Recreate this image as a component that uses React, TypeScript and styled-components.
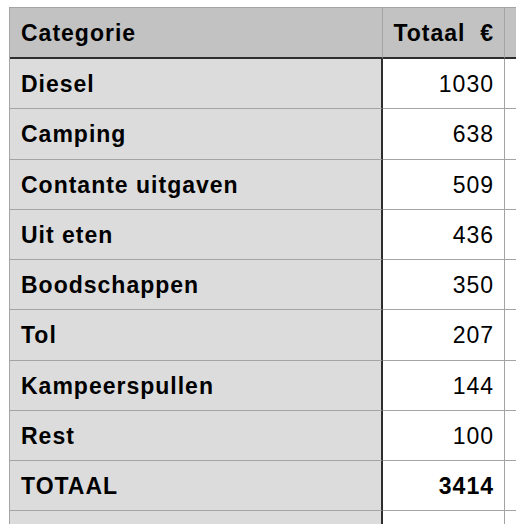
import React from "react";
import styled, { createGlobalStyle } from "styled-components";

const Global = createGlobalStyle`
  html, body { margin: 0; padding: 0; background: #ffffff; }
  body { font-family: "Liberation Sans", Arial, Helvetica, sans-serif; color: #000; }
`;

const Sheet = styled.div`
  width: 516px;
  height: 524px;
  overflow: hidden;
  padding: 7px 0 0 9px;
  box-sizing: border-box;
`;

const Grid = styled.div`
  display: grid;
  grid-template-columns: 373px 122px 40px;
  width: 536px;
  border-top: 1px solid #a4a4a4;
  border-left: 1px solid #a4a4a4;
`;

const Cell = styled.div<{ $head?: boolean; $kind: "label" | "value" | "spare"; $bold?: boolean }>`
  box-sizing: border-box;
  height: ${(p) => (p.$head ? "51px" : "50.25px")};
  display: flex;
  align-items: center;
  justify-content: ${(p) => (p.$kind === "value" ? "flex-end" : "flex-start")};
  padding: ${(p) => (p.$kind === "value" ? "2px 10px 0 0" : "2px 0 0 11px")};
  font-size: 23px;
  letter-spacing: 1px;
  font-weight: ${(p) => (p.$head || p.$kind === "label" || p.$bold ? 700 : 400)};
  white-space: pre;
  background: ${(p) =>
    p.$head ? "#c1c2c1" : p.$kind === "label" ? "#dcdcdc" : "#ffffff"};
  border-bottom: ${(p) => (p.$head ? "2px solid #2e2e2e" : "1px solid #a4a4a4")};
  border-right: ${(p) =>
    p.$kind === "label"
      ? p.$head
        ? "1px solid #a4a4a4"
        : "2px solid #2e2e2e"
      : "1px solid #a4a4a4"};
`;

const rows: [string, string][] = [
  ["Diesel", "1030"],
  ["Camping", "638"],
  ["Contante uitgaven", "509"],
  ["Uit eten", "436"],
  ["Boodschappen", "350"],
  ["Tol", "207"],
  ["Kampeerspullen", "144"],
  ["Rest", "100"],
];

export default function App() {
  return (
    <>
      <Global />
      <Sheet>
        <Grid>
          <Cell $head $kind="label">Categorie</Cell>
          <Cell $head $kind="value">Totaal  €</Cell>
          <Cell $head $kind="spare" />
          {rows.map(([c, v]) => (
            <React.Fragment key={c}>
              <Cell $kind="label">{c}</Cell>
              <Cell $kind="value">{v}</Cell>
              <Cell $kind="spare" />
            </React.Fragment>
          ))}
          <Cell $kind="label">TOTAAL</Cell>
          <Cell $kind="value" $bold>3414</Cell>
          <Cell $kind="spare" />
          <Cell $kind="label" />
          <Cell $kind="value" />
          <Cell $kind="spare" />
        </Grid>
      </Sheet>
    </>
  );
}
